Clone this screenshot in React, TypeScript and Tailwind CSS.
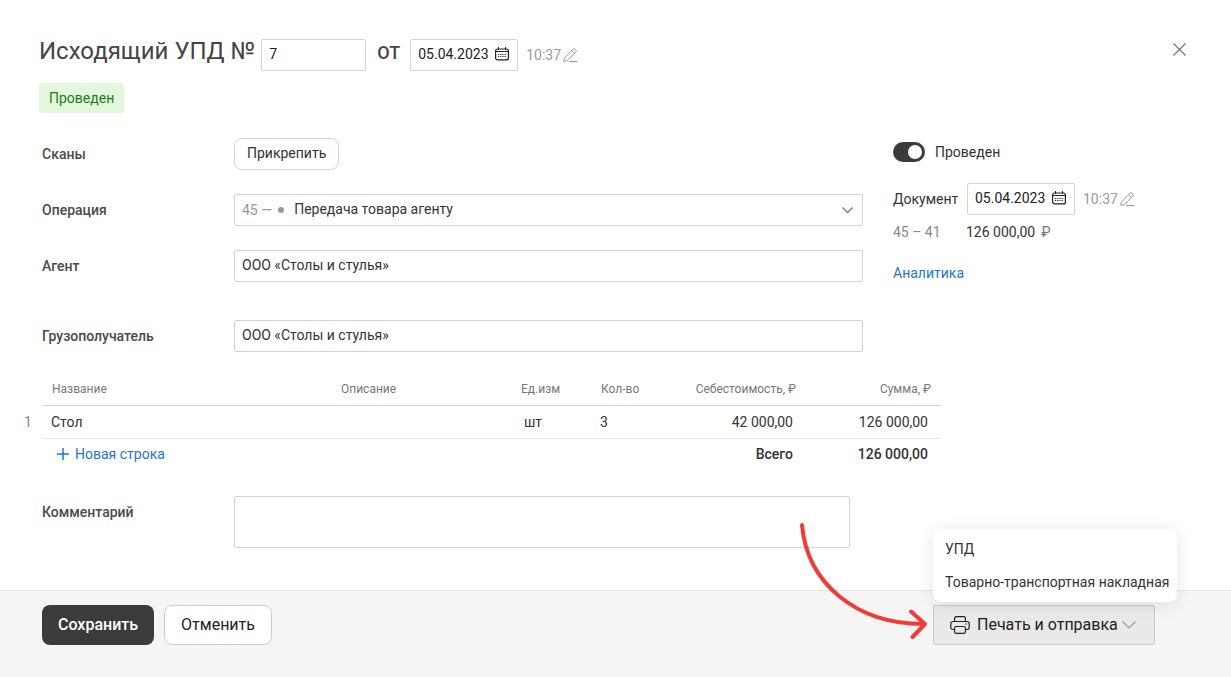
import { useState } from "react";

function CalendarIcon() {
  return (
    <svg width="14" height="14" viewBox="0 0 14 14" fill="none" stroke="#222" aria-hidden="true">
      <rect x="0.600" y="2" width="12.800" height="10.900" rx="2" strokeWidth="1.200" />
      <path d="M3.500 0v3M10.500 0v3M0.500 4.500h13" />
      <path d="M3 7.500h8M3 9.500h8" strokeDasharray="1.200 1" strokeWidth="1.200" />
    </svg>
  );
}

function PencilIcon() {
  return (
    <svg width="15" height="15" viewBox="0 0 15 15" fill="none" stroke="#999" strokeLinejoin="round" aria-hidden="true">
      <path d="M0.700 13.300l0.900-3.600L10 1.300c.6-.6 1.500-.6 2.100 0l.7.7c.6.6.6 1.500 0 2.100L4.400 12.500z" />
      <path d="M8.800 2.600l2.700 2.700M6 13.500h8.500" />
    </svg>
  );
}

function PrinterIcon() {
  return (
    <svg width="20" height="18" viewBox="0 0 20 18" fill="none" stroke="#222" strokeWidth="1.2" strokeLinejoin="round" aria-hidden="true">
      <path d="M4.600 5.500v-3c0-1 .7-1.800 1.800-1.800h7.200c1.100 0 1.800.8 1.800 1.800v3" />
      <path d="M4.600 13.500H3c-1.300 0-2.200-.9-2.200-2.200V7.700c0-1.300.9-2.200 2.200-2.200h14c1.300 0 2.200.9 2.200 2.200v3.600c0 1.300-.9 2.200-2.200 2.200h-1.600" />
      <rect x="4.600" y="10.500" width="10.800" height="6.800" rx="1.600" />
      <path d="M15.200 8h1.600" />
    </svg>
  );
}

function DateField({ id, label }: { id: string; label: string }) {
  const [value, setValue] = useState("05.04.2023");
  return (
    <div className="flex items-center">
      <div className="flex h-8 w-[108px] items-center rounded-xs border border-[#d3d3d3] bg-white pr-2 pb-[2px] pl-[7px]">
        <input
          id={id}
          aria-label={label}
          value={value}
          onChange={(e) => setValue(e.target.value)}
          className="w-full min-w-0 flex-1 text-sm text-[#222] outline-none"
        />
        <button type="button" aria-label="Открыть календарь" className="shrink-0">
          <CalendarIcon />
        </button>
      </div>
      <button type="button" className="ml-2 flex items-center gap-[2px] text-sm text-[#999]">
        10:37
        <PencilIcon />
      </button>
    </div>
  );
}

const fieldClass =
  "h-8 w-full min-w-0 rounded-xs border border-[#d3d3d3] bg-white px-[7px] pb-[2px] text-sm text-[#333] outline-none";
const labelClass = "w-48 shrink-0 text-sm font-medium text-[#4a4a4a]";

function TextRow({ id, label }: { id: string; label: string }) {
  return (
    <div className="flex items-center">
      <label htmlFor={id} className={labelClass}>
        {label}
      </label>
      <input id={id} defaultValue="ООО «Столы и стулья»" className={fieldClass} />
    </div>
  );
}

export default function App() {
  const [posted, setPosted] = useState(true);
  return (
    <div className="flex min-h-screen flex-col bg-white font-[Roboto,sans-serif] text-sm text-[#333]">
      <main className="flex-1 px-[39px] pt-[39px] pb-[42px]">
        <header className="flex items-center">
          <h1 className="mr-[6px] self-start text-2xl leading-6 text-[#444]">
            <label htmlFor="number">Исходящий УПД №</label>
          </h1>
          <input
            id="number"
            defaultValue="7"
            className="h-8 w-[105px] rounded-xs border border-[#d3d3d3] px-[7px] pb-[2px] text-sm text-[#222] outline-none"
          />
          <span className="mr-[10px] ml-[11px] pb-1 text-lg leading-6 font-medium text-[#444]">ОТ</span>
          <DateField id="date" label="Дата" />
          <button type="button" aria-label="Закрыть" className="mr-[6px] ml-auto self-start pt-1">
            <svg width="13" height="13" viewBox="0 0 13 13" stroke="#777" strokeWidth="1.300" aria-hidden="true">
              <path d="M0.500 0.500l12 12M12.500 0.500l-12 12" />
            </svg>
          </button>
        </header>

        <div className="mt-3 inline-flex h-[30px] items-center rounded-[3px] bg-[#e2f7dc] px-[10px] text-[#1f7a1f]">
          Проведен
        </div>

        <div className="ml-[3px]">
          <div className="mt-[25px] flex items-start gap-[30px]">
            <div className="flex min-w-0 flex-1 flex-col gap-6">
              <div className="flex items-center">
                <span className={labelClass}>Сканы</span>
                <button type="button" className="h-8 rounded-lg border border-[#d3d3d3] bg-white px-3 pb-[2px]">
                  Прикрепить
                </button>
              </div>
              <div className="flex items-center">
                <label htmlFor="operation" className={labelClass}>
                  Операция
                </label>
                <div className="flex h-8 min-w-0 flex-1 items-center rounded-xs border border-[#d3d3d3] px-[7px]">
                  <span className="mr-[10px] flex items-center text-[#999]">
                    45 —<span className="ml-[6px] size-[6px] rounded-full bg-[#999]" />
                  </span>
                  <select
                    id="operation"
                    className="h-full min-w-0 flex-1 appearance-none bg-transparent pb-[2px] outline-none"
                  >
                    <option>Передача товара агенту</option>
                  </select>
                  <svg width="13" height="8" viewBox="0 0 13 8" fill="none" stroke="#777" strokeWidth="1.300" className="mr-px" aria-hidden="true">
                    <path d="M1.500 1.500l5 5 5-5" />
                  </svg>
                </div>
              </div>
              <TextRow id="agent" label="Агент" />
              <div className="pt-[14px]">
                <TextRow id="consignee" label="Грузополучатель" />
              </div>
            </div>

            <aside className="w-[299px] shrink-0 pt-1">
              <label className="flex w-fit items-center gap-[10px]">
                <input
                  type="checkbox"
                  role="switch"
                  checked={posted}
                  onChange={(e) => setPosted(e.target.checked)}
                  className="peer sr-only"
                />
                <span className="flex h-5 w-8 items-center rounded-full bg-[#bbb] p-[3px] peer-checked:justify-end peer-checked:bg-[#3b3b3b]">
                  <span className="size-[14px] rounded-full bg-white" />
                </span>
                Проведен
              </label>
              <div className="mt-[21px] flex items-center">
                <label htmlFor="doc-date" className="w-[74px]">
                  Документ
                </label>
                <DateField id="doc-date" label="Документ" />
              </div>
              <div className="mt-[7px] flex leading-5">
                <span className="w-[73px] text-[#888]">45 – 41</span>
                <span>126 000,00</span>
                <span className="ml-[6px] text-[#777]">₽</span>
              </div>
              <a href="#analytics" className="mt-[21px] block w-fit leading-5 text-[#2673c9]">
                Аналитика
              </a>
            </aside>
          </div>

          <table className="mt-[22px] -ml-[18px] w-full max-w-[917px] table-fixed border-collapse">
            <colgroup>
              <col className="w-[18px]" />
              <col className="w-[290px]" />
              <col />
              <col className="w-[80px]" />
              <col className="w-[72px]" />
              <col className="w-[140px]" />
              <col className="w-[135px]" />
            </colgroup>
            <thead>
              <tr className="h-[31px] text-left text-xs text-[#777]">
                <td />
                <th className="border-b border-[#d3d3d3] pl-[10px] font-normal">Название</th>
                <th className="border-b border-[#d3d3d3] pl-[9px] font-normal">Описание</th>
                <th className="border-b border-[#d3d3d3] pl-[7px] font-normal">Ед.изм</th>
                <th className="border-b border-[#d3d3d3] pl-[7px] font-normal">Кол-во</th>
                <th className="border-b border-[#d3d3d3] pr-[10px] text-right font-normal">Себестоимость, ₽</th>
                <th className="border-b border-[#d3d3d3] pr-[10px] text-right font-normal">Сумма, ₽</th>
              </tr>
            </thead>
            <tbody>
              <tr className="h-[33px]">
                <td className="text-[#888]">1</td>
                <td className="border-b border-[#e8e8e8] pl-[9px]">Стол</td>
                <td className="border-b border-[#e8e8e8]" />
                <td className="border-b border-[#e8e8e8] pl-[10px]">шт</td>
                <td className="border-b border-[#e8e8e8] pl-[6px]">3</td>
                <td className="border-b border-[#e8e8e8] pr-[13px] text-right">42 000,00</td>
                <td className="border-b border-[#e8e8e8] pr-[13px] text-right">126 000,00</td>
              </tr>
            </tbody>
            <tfoot>
              <tr className="h-8">
                <td />
                <td colSpan={4} className="pl-[15px]">
                  <button type="button" className="flex items-center gap-[6px] text-[#1f74d1]">
                    <svg width="12" height="12" viewBox="0 0 12 12" stroke="#1f74d1" strokeWidth="1.500" aria-hidden="true">
                      <path d="M6 0v12M0 6h12" />
                    </svg>
                    Новая строка
                  </button>
                </td>
                <td className="pr-[13px] text-right font-medium">Всего</td>
                <td className="pr-[13px] text-right font-medium">126 000,00</td>
              </tr>
            </tfoot>
          </table>

          <div className="mt-[26px] flex max-w-[808px] items-start">
            <label htmlFor="comment" className={`${labelClass} pt-[6px]`}>
              Комментарий
            </label>
            <textarea
              id="comment"
              className="block h-[52px] w-full min-w-0 resize-none rounded-xs border border-[#d3d3d3] bg-white p-2 outline-none"
            />
          </div>
        </div>
      </main>

      <footer className="flex items-center gap-[10px] border-t border-[#e6e6e6] bg-[#f5f5f5] pt-[14px] pr-[76px] pb-8 pl-[42px] text-base text-[#222]">
        <button type="button" className="h-10 rounded-lg bg-[#3b3b3b] px-4 font-medium text-white">
          Сохранить
        </button>
        <button type="button" className="h-10 rounded-lg border border-[#ccc] bg-white px-4">
          Отменить
        </button>
        <div className="relative ml-auto">
          <button
            type="button"
            aria-haspopup="menu"
            aria-expanded="true"
            className="flex h-10 w-[222px] items-center rounded-xs border border-[#ccc] bg-[#e9e9e9] pl-4"
          >
            <PrinterIcon />
            <span className="ml-[7px]">Печать и отправка</span>
            <svg width="14" height="8" viewBox="0 0 14 8" fill="none" stroke="#999" strokeWidth="1.200" className="ml-1" aria-hidden="true">
              <path d="M0.500 0.500L7 7l6.500-6.500" />
            </svg>
          </button>
          <ul
            role="menu"
            className="absolute bottom-full left-0 mb-[3px] w-[244px] rounded-lg bg-white py-[3px] text-sm text-[#333] shadow-[0_2px_18px_rgba(0,0,0,0.1)]"
          >
            <li role="none">
              <button type="button" role="menuitem" className="block h-[33px] w-full px-3 text-left whitespace-nowrap">
                УПД
              </button>
            </li>
            <li role="none">
              <button type="button" role="menuitem" className="block h-[34px] w-full px-3 text-left whitespace-nowrap">
                Товарно-транспортная накладная
              </button>
            </li>
          </ul>
          <svg
            width="134"
            height="124"
            viewBox="799 520 134 124"
            fill="none"
            stroke="#f23b36"
            strokeWidth="4"
            strokeLinecap="round"
            strokeLinejoin="round"
            className="pointer-events-none absolute -top-[85px] right-full"
            aria-hidden="true"
          >
            <path d="M802 525C807 583 856 624 923 624" />
            <path d="M911 611.500L925 624L912.500 637" />
          </svg>
        </div>
      </footer>
    </div>
  );
}
